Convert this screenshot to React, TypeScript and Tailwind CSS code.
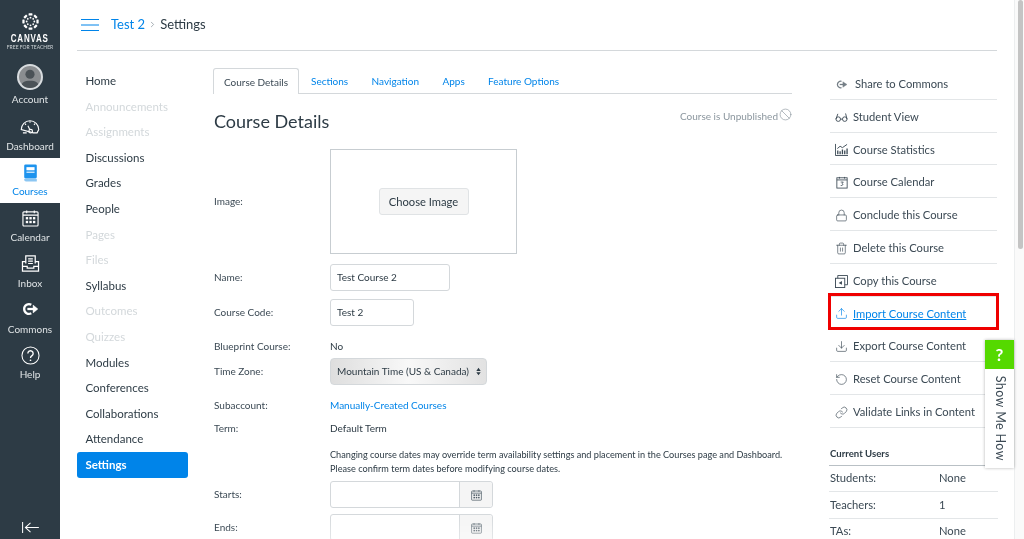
import React from 'react';
import { Lock, Trash2, Upload, Download, RotateCcw, Link as LinkIcon, Ban, ChevronRight } from 'lucide-react';

const ICON = 'w-[13px] h-[13px] stroke-[1.2]';

function Logo() {
    const spokes = [0, 45, 90, 135, 180, 225, 270, 315];
    return (
        <svg viewBox="0 0 24 24" className="w-[17px] h-[17px]" fill="#fff">
            {spokes.map((a) => (
                <g key={a} transform={`rotate(${a} 12 12)`}>
                    <rect x="9.3" y="0.5" width="5.4" height="3.2" rx="0.6" />
                    <circle cx="12" cy="6.6" r="1.3" />
                </g>
            ))}
        </svg>
    );
}

function GaugeIcon() {
    return (
        <svg viewBox="0 0 24 18" className="w-[20px] h-[16px]" fill="none" stroke="#fff" strokeWidth="1.3">
            <path d="M3.500 16 H8 M16 16 H20.500 L22.500 12 A10.500 10.500 0 0 0 1.500 12 Z" />
            <path d="M12 2v2M6 5l1.200 1.400M18 5l-1.200 1.400" />
            <circle cx="12.800" cy="14" r="2.200" />
            <path d="M9.500 7.500l2.200 4.600" />
        </svg>
    );
}

function BookIcon() {
    return (
        <svg viewBox="0 0 16 20" className="w-[15px] h-[18px]">
            <rect x="1" y="0.5" width="14" height="15.500" rx="1.500" fill="#1d93ee" />
            <rect x="3.500" y="3.500" width="9" height="3.500" fill="#fff" />
            <rect x="3.500" y="8.500" width="9" height="1.200" fill="#fff" />
            <path d="M1 16.500h14v3H3a2 2 0 0 1-2-2z" fill="#8cc6f2" />
        </svg>
    );
}

function GridCalendar({ cls, stroke }: { cls: string; stroke: string }) {
    return (
        <svg viewBox="0 0 18 18" className={cls} fill="none" stroke={stroke} strokeWidth="1.200">
            <rect x="1" y="2.500" width="16" height="15" rx="1" />
            <path d="M1 6h16M5 1v3M13 1v3" />
            <g fill={stroke} stroke="none">
                <rect x="4" y="8" width="2.500" height="2.500" />
                <rect x="7.800" y="8" width="2.500" height="2.500" />
                <rect x="11.600" y="8" width="2.500" height="2.500" />
                <rect x="4" y="12" width="2.500" height="2.500" />
                <rect x="7.800" y="12" width="2.500" height="2.500" />
                <rect x="11.600" y="12" width="2.500" height="2.500" />
            </g>
        </svg>
    );
}

function InboxIcon() {
    return (
        <svg viewBox="0 0 20 18" className="w-[19px] h-[17px]" fill="none" stroke="#fff" strokeWidth="1.300">
            <path d="M5 9V1h10v8" />
            <path d="M7.500 4h5M7.500 6.500h5M7.500 9h5" />
            <path d="M5 7H1.500v10h17V7H15M1.500 12h5v2h7v-2h5" />
        </svg>
    );
}

function CommonsIcon() {
    return (
        <svg viewBox="0 0 20 16" className="w-[18px] h-[14px]" fill="none" stroke="#fff">
            <path d="M11.500 3.200A5.500 5.500 0 1 0 11.500 12.800" strokeWidth="2.600" />
            <path d="M7 8h8" strokeWidth="2.600" />
            <path d="M13.500 3.500L19 8l-5.500 4.500z" fill="#fff" strokeWidth="0.5" />
        </svg>
    );
}

function HelpIcon() {
    return (
        <svg viewBox="0 0 20 20" className="w-[19px] h-[19px]" fill="none" stroke="#fff" strokeWidth="1.100">
            <circle cx="10" cy="10" r="9" />
            <path d="M7.200 7.800a2.800 2.800 0 1 1 4.400 2.300c-1 .7-1.600 1.200-1.600 2.400" strokeWidth="1.400" />
            <circle cx="10" cy="15" r="0.9" fill="#fff" stroke="none" />
        </svg>
    );
}

function Avatar() {
    return (
        <div className="w-[26px] h-[26px] rounded-full border-2 border-[#d8dcdf] bg-[#8a8d90] overflow-hidden flex items-center justify-center">
            <svg viewBox="0 0 24 24" className="w-[24px] h-[24px]" fill="#4b5257">
                <circle cx="12" cy="9" r="5" />
                <path d="M2 24c0-6 4-8 10-8s10 2 10 8z" />
            </svg>
        </div>
    );
}

function GlobalItem({ icon, label, box, gap, active }: { icon: React.ReactNode; label: string; box: string; gap: string; active?: boolean }) {
    return (
        <div className={`${box} flex flex-col items-center text-[10px] leading-[13px] ${active ? 'bg-white text-[#0084e9]' : 'text-[#dfe3e5]'}`}>
            {icon}
            <span className={gap}>{label}</span>
        </div>
    );
}

function GlobalNav() {
    return (
        <aside className="w-[60px] shrink-0 bg-[#2d3b45] flex flex-col">
            <div className="h-[60px] flex flex-col items-center pt-[13px] text-white">
                <Logo />
                <div className="text-[10px] leading-[10px] font-bold tracking-[1px] mt-[4px] font-['Liberation_Sans',sans-serif] scale-x-[0.8]">CANVAS</div>
                <div className="text-[5px] leading-[6px] text-[#cfd4d7] whitespace-nowrap">FREE FOR TEACHER</div>
            </div>
            <GlobalItem box="h-[46px] pt-[4px]" gap="mt-[3.5px]" icon={<Avatar />} label="Account" />
            <GlobalItem box="h-[52px] pt-[13px]" gap="mt-[4.5px]" icon={<GaugeIcon />} label="Dashboard" />
            <GlobalItem box="h-[45px] pt-[6px]" gap="mt-[2.5px]" icon={<BookIcon />} label="Courses" active />
            <GlobalItem box="h-[45px] pt-[6px]" gap="mt-[3.5px]" icon={<GridCalendar cls="w-[17px] h-[18px]" stroke="#fff" />} label="Calendar" />
            <GlobalItem box="h-[46px] pt-[7px]" gap="mt-[4.5px]" icon={<InboxIcon />} label="Inbox" />
            <GlobalItem box="h-[46px] pt-[8px]" gap="mt-[6.5px]" icon={<CommonsIcon />} label="Commons" />
            <GlobalItem box="h-[45px] pt-[6px]" gap="mt-[2.5px]" icon={<HelpIcon />} label="Help" />
            <div className="mt-auto h-[18px] flex items-start justify-center text-white">
                <svg viewBox="0 0 20 14" className="w-[19px] h-[13px]" fill="none" stroke="#fff" strokeWidth="1.100">
                    <path d="M1.500 1v12M19 7H4.500M10 2L4.500 7l5.500 5" />
                </svg>
            </div>
        </aside>
    );
}

const courseNav: [string, boolean][] = [
    ['Home', true], ['Announcements', false], ['Assignments', false], ['Discussions', true], ['Grades', true],
    ['People', true], ['Pages', false], ['Files', false], ['Syllabus', true], ['Outcomes', false], ['Quizzes', false],
    ['Modules', true], ['Conferences', true], ['Collaborations', true], ['Attendance', true],
];

function CourseNav() {
    return (
        <nav className="w-[111px] shrink-0 text-[11.5px] mt-[17px]">
            {courseNav.map(([label, on]) => (
                <div key={label} className={`h-[25.6px] leading-[25.6px] pl-[8.5px] ${on ? 'text-[#2d3b45]' : 'text-[#d3d8db]'}`}>{label}</div>
            ))}
            <div className="h-[25.6px] leading-[25.6px] pl-[8.5px] bg-[#0084e9] rounded-[3px] text-white font-bold">Settings</div>
        </nav>
    );
}

function Tabs() {
    const tabs = ['Sections', 'Navigation', 'Apps', 'Feature Options'];
    return (
        <div className="flex items-end h-[26px] border-b border-[#d4d8db] text-[10px]">
            <div className="h-[26px] w-[86px] -mb-px pt-[1px] bg-white border border-b-0 border-[#d4d8db] rounded-t-[3px] flex items-center justify-center text-[#3b4954]">Course Details</div>
            {tabs.map((t, i) => (
                <div key={t} className={`h-[25px] pt-[1px] flex items-center text-[#0084e9] ${i === 0 ? 'ml-[12px]' : 'ml-[23.4px]'}`}>{t}</div>
            ))}
        </div>
    );
}

function Row({ label, h, mt, children }: { label: string; h: string; mt: string; children: React.ReactNode }) {
    return (
        <div className={`flex items-center ${h} ${mt} text-[10px] text-[#2d3b45]`}>
            <div className="w-[117px] pl-px shrink-0 text-[#3b4954]">{label}</div>
            {children}
        </div>
    );
}

function DateInput() {
    return (
        <div className="w-[163px] h-[27px] border border-[#d4d8db] rounded-[3px] flex">
            <div className="flex-1" />
            <div className="w-[33px] bg-[#f5f5f5] border-l border-[#d4d8db] rounded-r-[3px] flex items-center justify-center">
                <GridCalendar cls="w-[11px] h-[12px]" stroke="#4c5a64" />
            </div>
        </div>
    );
}

function Content() {
    return (
        <section className="w-[579px] shrink-0 ml-[25px] mt-[17px]">
            <Tabs />
            <div className="flex justify-between items-start h-[55px]">
                <h1 className="text-[18px] leading-[24px] mt-[15px] pl-px text-[#2d3b45]">Course Details</h1>
                <div className="flex items-start mt-[14px] text-[#8b969e] text-[10px]">
                    <span className="mt-[2px] leading-[13px]">Course is Unpublished</span>
                    <Ban className="w-[13px] h-[13px] ml-px stroke-[1.2]" />
                </div>
            </div>
            <Row label="Image:" h="h-[105px]" mt="mt-0">
                <div className="w-[187px] h-[105px] border border-[#c7cdd1] flex items-center justify-center">
                    <div className="w-[90px] h-[27px] pt-[1px] bg-[#f5f5f5] border border-[#e0e3e5] rounded-[3px] flex items-center justify-center text-[11.2px] text-[#2d3b45]">Choose Image</div>
                </div>
            </Row>
            <Row label="Name:" h="h-[27px]" mt="mt-[10px]">
                <div className="w-[120px] h-[27px] border border-[#d4d8db] rounded-[3px] flex items-center pl-[6px]">Test Course 2</div>
            </Row>
            <Row label="Course Code:" h="h-[27px]" mt="mt-[8px]">
                <div className="w-[84px] h-[27px] border border-[#d4d8db] rounded-[3px] flex items-center pl-[6px]">Test 2</div>
            </Row>
            <Row label="Blueprint Course:" h="h-[14px]" mt="mt-[13px]">
                <span>No</span>
            </Row>
            <Row label="Time Zone:" h="h-[27px]" mt="mt-[5px]">
                <div className="w-[157px] h-[27px] rounded-[4px] border border-[#d4d8db] bg-gradient-to-r from-[#dedede] via-[#f8f8f8] to-[#e2e2e2] flex items-center justify-between pl-[6px] pr-[5px]">
                    <span>Mountain Time (US &amp; Canada)</span>
                    <svg viewBox="0 0 8 12" className="w-[5px] h-[9px]" fill="#2d3b45"><path d="M4 0l3.500 5h-7zM4 12l3.500-5h-7z" /></svg>
                </div>
            </Row>
            <Row label="Subaccount:" h="h-[14px]" mt="mt-[13px]">
                <span className="text-[#0084e9]">Manually-Created Courses</span>
            </Row>
            <Row label="Term:" h="h-[14px]" mt="mt-[9px]">
                <span>Default Term</span>
            </Row>
            <div className="ml-[117px] mt-[13px] text-[9.17px] leading-[13.5px] text-[#2d3b45] whitespace-nowrap">
                <p>Changing course dates may override term availability settings and placement in the Courses page and Dashboard.</p>
                <p>Please confirm term dates before modifying course dates.</p>
            </div>
            <Row label="Starts:" h="h-[27px]" mt="mt-[6px]"><DateInput /></Row>
            <Row label="Ends:" h="h-[27px]" mt="mt-[6px]"><DateInput /></Row>
        </section>
    );
}

function Glasses() {
    return (
        <svg viewBox="0 0 16 12" className="w-[13px] h-[11px]" fill="none" stroke="currentColor" strokeWidth="1.100">
            <circle cx="4" cy="8" r="2.800" />
            <circle cx="12" cy="8" r="2.800" />
            <path d="M6.800 8h2.400M1.200 8L3.500 1.500M14.800 8L13 1" />
        </svg>
    );
}

function Stats() {
    return (
        <svg viewBox="0 0 14 14" className="w-[13px] h-[13px]" fill="none" stroke="currentColor" strokeWidth="1">
            <path d="M.5 1v12.500H14" />
            <path d="M3 12V8M5.500 12V9M8 12V7M10.500 12V8M13 12V6" strokeWidth="1.400" />
            <path d="M2.500 6L5.500 3.500 8 5l5-3.500" />
        </svg>
    );
}

function SmallCal() {
    return (
        <svg viewBox="0 0 14 14" className="w-[12px] h-[13px]" fill="none" stroke="currentColor" strokeWidth="1">
            <rect x="1" y="1.500" width="12" height="12" />
            <path d="M1 4h12M4 .5v2M10 .5v2" />
            <path d="M5.500 6.500h3L7 8.200c1.500 0 1.500 2.800-1.500 2.300" strokeWidth="0.9" />
        </svg>
    );
}

function CopyCourse() {
    return (
        <svg viewBox="0 0 14 14" className="w-[13px] h-[13px]" fill="none" stroke="currentColor" strokeWidth="1">
            <rect x="0.5" y="3.500" width="10" height="10" />
            <path d="M3 3.500v-3h10.500v10h-3" />
            <path d="M7.500 6.500L4 8.500l3.500 2z" fill="currentColor" stroke="none" />
        </svg>
    );
}

function ShareIcon() {
    return (
        <svg viewBox="0 0 14 12" className="w-[13px] h-[11px] opacity-70" fill="none" stroke="currentColor" strokeWidth="1.400">
            <path d="M7 2.500A3.600 3.600 0 1 0 7 9.500" />
            <path d="M5 6h5" />
            <path d="M8.500 3L13 6 8.500 9z" fill="currentColor" strokeWidth="0.4" />
        </svg>
    );
}

const actions: { label: string; icon: React.ReactNode; gap?: string; current?: boolean }[] = [
    { label: 'Share to Commons', icon: <ShareIcon />, gap: 'gap-[7px]' },
    { label: 'Student View', icon: <Glasses /> },
    { label: 'Course Statistics', icon: <Stats /> },
    { label: 'Course Calendar', icon: <SmallCal /> },
    { label: 'Conclude this Course', icon: <Lock className={ICON} /> },
    { label: 'Delete this Course', icon: <Trash2 className={ICON} /> },
    { label: 'Copy this Course', icon: <CopyCourse /> },
    { label: 'Import Course Content', icon: <Upload className={ICON} />, current: true },
    { label: 'Export Course Content', icon: <Download className={ICON} /> },
    { label: 'Reset Course Content', icon: <RotateCcw className={ICON} /> },
    { label: 'Validate Links in Content', icon: <LinkIcon className={ICON} /> },
];

function Sidebar() {
    const stats = [['Students:', 'None'], ['Teachers:', '1'], ['TAs:', 'None']];
    return (
        <aside className="w-[169px] shrink-0 ml-[37px] mt-[16px] text-[11.2px] text-[#3b4954]">
            {actions.map((a) => (
                <div key={a.label} className={`relative h-[32.8px] flex items-center pl-[5px] pt-[3px] mx-px border-b border-[#e3e6e8] ${a.gap ?? 'gap-[5px]'} ${a.current ? 'text-[#0084e9]' : ''}`}>
                    <span className="w-[13px] flex justify-center shrink-0">{a.icon}</span>
                    <span className={a.current ? 'underline' : ''}>{a.label}</span>
                    {a.current && <div className="absolute left-[-2px] right-[-2px] top-[-4px] h-[37px] border-[3px] border-[#ef0000]" />}
                </div>
            ))}
            <div className="mt-[20px] h-[12px] leading-[12px] text-[9.6px] font-bold pl-[1px] text-[#2d3b45]">Current Users</div>
            <div className="mt-[5px] border-t border-[#b9c0c5]">
                {stats.map(([k, v]) => (
                    <div key={k} className="h-[26.5px] flex items-center border-b border-[#e3e6e8] pl-[1px]">
                        <span className="w-[109px]">{k}</span>
                        <span>{v}</span>
                    </div>
                ))}
            </div>
        </aside>
    );
}

function ShowMeHow() {
    return (
        <div className="absolute left-[985px] top-[340px] w-[29px] h-[128px] bg-white shadow-[0_0_3px_rgba(0,0,0,0.3)] flex flex-col">
            <div className="h-[29px] bg-[#55d900] text-white font-bold text-[17px] flex items-center justify-center">?</div>
            <div className="flex-1 flex items-center justify-center">
                <span className="rotate-90 whitespace-nowrap text-[12.5px] tracking-[0.4px] text-[#3b4954]">Show Me How</span>
            </div>
        </div>
    );
}

export default function App() {
    return (
        <div className="relative flex w-[1024px] h-[539px] overflow-hidden bg-white font-[Lato,sans-serif] blur-[0.35px]">
            <GlobalNav />
            <main className="w-[954px] shrink-0 pl-[17px]">
                <header className="w-[920px] h-[51px] border-b border-[#d4d8db] flex items-center text-[13px] pb-px">
                    <svg viewBox="0 0 18 14" className="ml-[4px] w-[18px] h-[14px]" fill="none" stroke="#0084e9" strokeWidth="1">
                        <path d="M0 1.500h18M0 7h18M0 12.500h18" />
                    </svg>
                    <span className="ml-[12px] text-[#0084e9]">Test 2</span>
                    <ChevronRight className="w-[9px] h-[9px] mx-[3px] text-[#8b969e]" />
                    <span className="text-[#2d3b45]">Settings</span>
                </header>
                <div className="flex">
                    <CourseNav />
                    <Content />
                    <Sidebar />
                </div>
            </main>
            <div className="w-[10px] shrink-0 border-l border-[#eceeef] bg-[#fafafa] pl-[3px]">
                <div className="w-[5px] h-[249px] rounded-full bg-[#c4c4c4]" />
            </div>
            <ShowMeHow />
            <div className="absolute left-[240px] top-[532px] w-[540px] h-[20px] bg-white/60 blur-md" />
        </div>
    );
}
